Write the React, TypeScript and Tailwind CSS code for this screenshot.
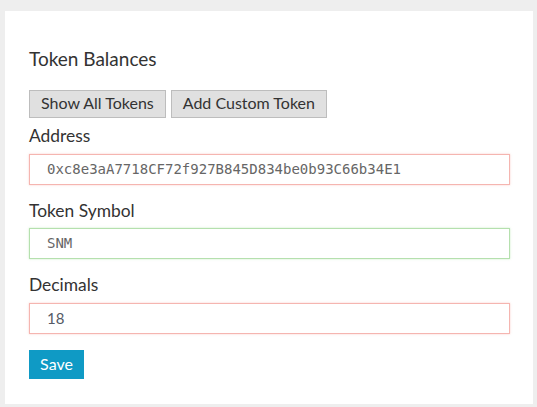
import React from "react";

export default function App() {
  const lato = { fontFamily: "Lato, 'Noto Sans', sans-serif" };
  const mono = { fontFamily: "'DejaVu Sans Mono', monospace" };
  return (
    <div className="min-h-[407px] w-[537px] bg-[#eeeeee] pt-[11px] pl-[5px] pr-[4px] pb-[3px]" style={lato}>
      <div className="bg-white pl-[24px] pr-[23px] pt-[37px] h-[393px]">
        <h2 className="text-[19px] leading-[22px] text-[#333333] font-normal">Token Balances</h2>
        <div className="mt-[19.5px] flex gap-[5px]">
          <button className="h-[28px] px-[11px] pb-[3px] bg-[#e0e0e0] border border-[#bdbdbd] text-[16px] leading-[19px] text-[#333333] flex items-center">Show All Tokens</button>
          <button className="h-[28px] px-[11px] pb-[3px] bg-[#e0e0e0] border border-[#bdbdbd] text-[16px] leading-[19px] text-[#333333] flex items-center">Add Custom Token</button>
        </div>
        <label className="block mt-[8.5px] text-[17.4px] leading-[20px] text-[#333333]">Address</label>
        <div className="mt-[7.5px] h-[31px] border border-[#f5b5b0] shadow-[0_0_2px_rgba(245,160,150,0.5)] flex items-center pl-[17px] text-[14px] text-[#666666]" style={mono}>
          0xc8e3aA7718CF72f927B845D834be0b93C66b34E1
        </div>
        <label className="block mt-[16px] text-[17.4px] leading-[20px] text-[#333333]">Token Symbol</label>
        <div className="mt-[7.5px] h-[31px] border border-[#b5e0ae] shadow-[0_0_2px_rgba(150,220,140,0.5)] flex items-center pl-[17px] text-[14px] text-[#666666]" style={mono}>
          SNM
        </div>
        <label className="block mt-[16px] text-[17.4px] leading-[20px] text-[#333333]">Decimals</label>
        <div className="mt-[7.5px] h-[31px] border border-[#f5b5b0] shadow-[0_0_2px_rgba(245,160,150,0.5)] flex items-center pl-[17px] text-[15px] text-[#555a66]">
          18
        </div>
        <button className="mt-[16.5px] h-[29px] w-[55px] pb-[2px] bg-[#0f9ac5] text-white text-[16px] leading-[19px] flex items-center justify-center">Save</button>
      </div>
    </div>
  );
}
